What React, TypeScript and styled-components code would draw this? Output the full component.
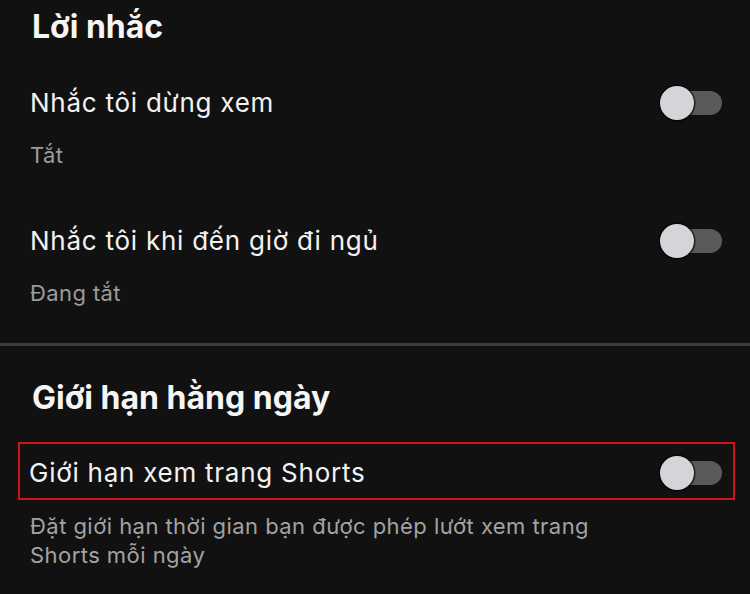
import React from "react";
import styled, { createGlobalStyle } from "styled-components";

const Global = createGlobalStyle`
  html, body {
    margin: 0;
    padding: 0;
    background: #111111;
  }
  body {
    font-family: Inter, "Noto Sans", "Liberation Sans", sans-serif;
    -webkit-font-smoothing: antialiased;
  }
`;

const Page = styled.div`
  width: 750px;
  height: 594px;
  overflow: hidden;
  background: #111111;
  color: #f2f2f2;
`;

const Section = styled.section<{ $top: number }>`
  padding: ${(p) => p.$top}px 28px 0 30px;
  display: flex;
  flex-direction: column;
`;

const Heading = styled.h2`
  margin: 0 0 0 2px;
  font-size: 32px;
  line-height: 38px;
  font-weight: 700;
  color: #f5f5f5;
  letter-spacing: 0;
`;

const Row = styled.div<{ $gap: number }>`
  margin-top: ${(p) => p.$gap}px;
  display: flex;
  flex-direction: column;
`;

const TitleLine = styled.div`
  display: flex;
  align-items: center;
  justify-content: space-between;
  height: 32px;
`;

const Title = styled.span`
  font-size: 26px;
  line-height: 32px;
  font-weight: 400;
  letter-spacing: 0.75px;
  color: #f2f2f2;
`;

const Sub = styled.span`
  margin-top: 21.5px;
  font-size: 22px;
  line-height: 28px;
  letter-spacing: 0.4px;
  color: #9c9c9c;
`;

const Track = styled.div`
  width: 62px;
  height: 24px;
  border-radius: 12px;
  background: #5a5a5a;
  display: flex;
  align-items: center;
  flex-shrink: 0;
`;

const Knob = styled.div`
  width: 34px;
  height: 34px;
  border-radius: 50%;
  background: #d3d5d9;
  box-shadow: 0 0 0 1.5px rgba(0, 0, 0, 0.55), 0 1px 3px rgba(0, 0, 0, 0.6);
`;

const Divider = styled.hr`
  margin: 36.5px 0 0;
  border: 0;
  height: 3px;
  background: #3b3b3b;
`;

const Highlight = styled.div`
  margin: 25.5px -13px 0 -12px;
  border: 2px solid #d0101b;
  padding: 12.5px 11px 9.5px 9px;
  display: flex;
  align-items: center;
  justify-content: space-between;
  height: 32px;
`;

const Description = styled.p`
  margin: 11.75px 0 0;
  font-size: 22px;
  line-height: 28.5px;
  letter-spacing: 0.45px;
  color: #a3a3a3;
  max-width: 600px;
`;

const Switch = () => (
  <Track>
    <Knob />
  </Track>
);

export default function App() {
  return (
    <Page>
      <Global />
      <Section $top={8.4}>
        <Heading>Lời nhắc</Heading>
        <Row $gap={41}>
          <TitleLine>
            <Title>Nhắc tôi dừng xem</Title>
            <Switch />
          </TitleLine>
          <Sub>Tắt</Sub>
        </Row>
        <Row $gap={56.5}>
          <TitleLine>
            <Title>Nhắc tôi khi đến giờ đi ngủ</Title>
            <Switch />
          </TitleLine>
          <Sub>Đang tắt</Sub>
        </Row>
      </Section>
      <Divider />
      <Section $top={32.4}>
        <Heading>Giới hạn hằng ngày</Heading>
        <Highlight>
          <Title>Giới hạn xem trang Shorts</Title>
          <Switch />
        </Highlight>
        <Description>
          Đặt giới hạn thời gian bạn được phép lướt xem trang Shorts mỗi ngày
        </Description>
      </Section>
    </Page>
  );
}
